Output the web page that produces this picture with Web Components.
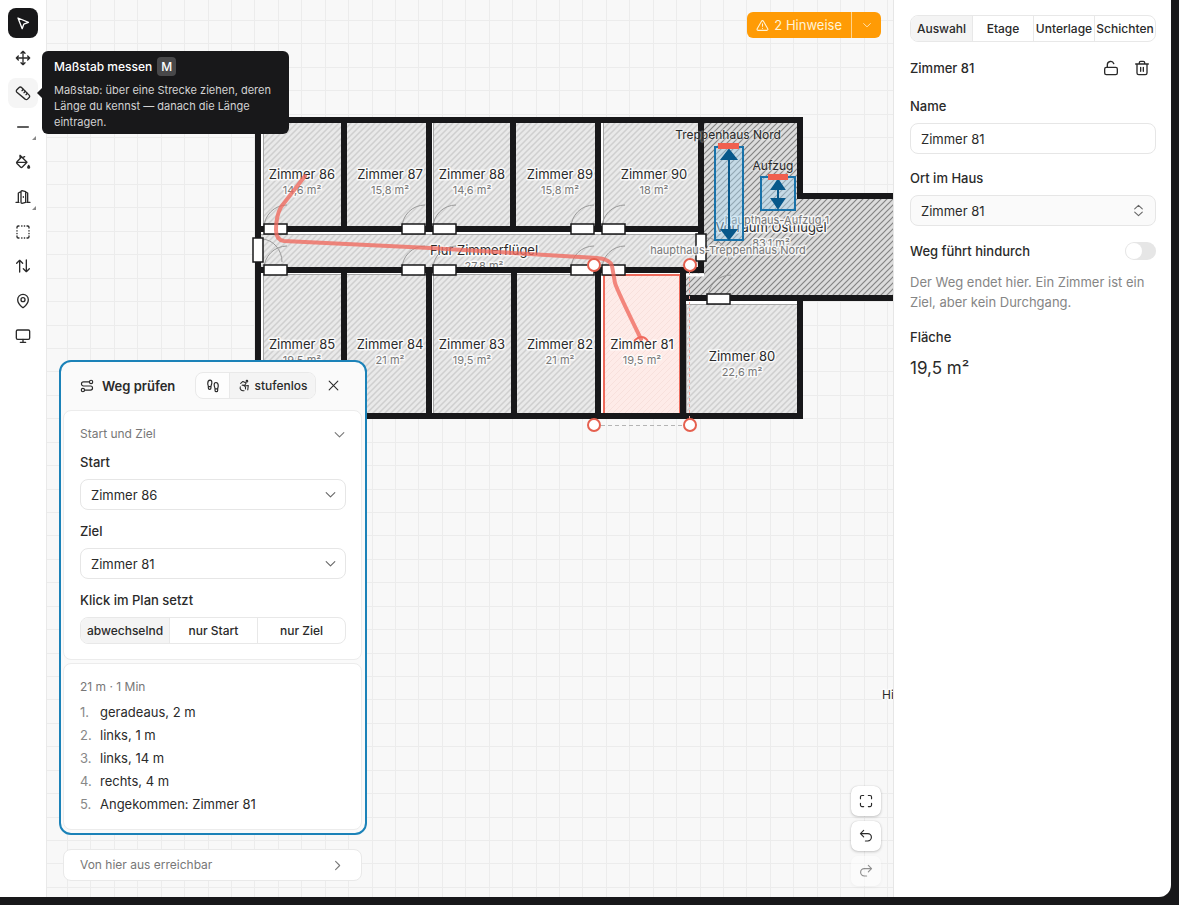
<!DOCTYPE html>
<html lang="de">
<head>
<meta charset="utf-8">
<title>Lageplan – Editor</title>
<style>
html,body{height:100%;margin:0}
body{background:#18181a;font-family:Inter,"Liberation Sans",sans-serif;font-size:13px;color:#2a2a2a}
</style>
</head>
<body>
<plan-app></plan-app>
<script>
const ICONS = {
  pointer:'<path d="M4.5 4.5l6.3 16 2.4-6.8 7-2.5z"/>',
  move:'<path d="M12 2v20M2 12h20M9 5l3-3 3 3M9 19l3 3 3-3M5 9l-3 3 3 3M19 9l3 3-3 3"/>',
  ruler:'<path d="M2.800 7.200l3.400-3.400a2.500 2.500 0 0 1 3.600 0l11.400 11.400a2.500 2.500 0 0 1 0 3.600l-2.400 2.400a2.500 2.500 0 0 1-3.600 0L2.800 10.800a2.500 2.500 0 0 1 0-3.600z"/><path d="M10.500 8.500l2-2M13.500 11.500l2-2M16.500 14.500l2-2"/>',
  line:'<path d="M4 12h16"/>',
  bucket:'<path d="M9.500 5L3 11.500a2 2 0 0 0 0 2.800l5.200 5.200a2 2 0 0 0 2.800 0l7-7L7.500 2M2.800 12.500H18M7.500 2v3M12 5l2.500-1"/><path d="M20.500 17c.8 1.200 1.400 2 1.400 2.900a1.400 1.400 0 0 1-2.800 0c0-.9.600-1.700 1.400-2.900z" fill="currentColor"/>',
  door:'<path d="M1.500 20H6M18 20h4.500M5 20V6l4-2M19 20V6l-3-1.500M9 20V4a1.500 1.500 0 0 1 1.500-1.500L16 4v16l-5.500 1.500A1.500 1.500 0 0 1 9 20zM12.500 11.500v1"/>',
  dashed:'<path d="M3 6V5a2 2 0 0 1 2-2h1M18 3h1a2 2 0 0 1 2 2v1M21 18v1a2 2 0 0 1-2 2h-1M6 21H5a2 2 0 0 1-2-2v-1M10 3h.5M14 3h.5M10 21h.5M14 21h.5M3 10v.5M3 14v.5M21 10v.5M21 14v.5"/>',
  updown:'<path d="M7 21V3.500M2.500 8L7 3.500 11.500 8M17 3v17.500M12.500 16l4.500 4.500 4.500-4.500"/>',
  pin:'<path d="M20 10c0 5-5.500 10.200-7.400 11.800a1 1 0 0 1-1.200 0C9.500 20.200 4 15 4 10a8 8 0 0 1 16 0z"/><circle cx="12" cy="10" r="3"/>',
  monitor:'<rect x="2" y="3" width="20" height="14" rx="2"/><path d="M8 21.500h8M12 17v4"/>',
  route:'<circle cx="5" cy="19" r="2.800"/><circle cx="19" cy="5" r="2.800"/><path d="M16 5H6a3.500 3.500 0 0 0 0 7h12a3.500 3.500 0 0 1 0 7H8"/>',
  feet:'<path d="M4 15.500v-2.400C4 11 3 10 3 7.500 3 4.500 4.500 2 7 2s3 2 3 3.800c0 3-1.500 4.900-1.500 7.500v2.200a2.200 2.200 0 1 1-4.500 0zM20 19.500v-2.400c0-2.100 1-3.100 1-5.600C21 8.500 19.500 6 17 6s-3 2-3 3.800c0 3 1.500 4.900 1.500 7.500v2.200a2.200 2.200 0 1 0 4.500 0zM15.500 17H20M4 13h4.500"/>',
  access:'<circle cx="16.500" cy="4" r="1.500"/><path d="M18 20l1-8-7 1M5 8l4-3.500 6 3-3.500 5.500M4.200 14.500a5.500 5.500 0 0 0 6.800 7M13.800 18.500A5.500 5.500 0 0 0 7.500 11.500"/>',
  close:'<path d="M20 4L4 20M4 4l16 16"/>',
  down:'<path d="M4 8.500l8 8 8-8"/>',
  right:'<path d="M8.500 4.500l7.500 7.500-7.500 7.500"/>',
  sort:'<path d="M5 9L12 2.500 19 9M5 15l7 6.500 7-6.500"/>',
  warn:'<path d="M21.700 18l-8-14a2 2 0 0 0-3.500 0l-8 14A2 2 0 0 0 4 21h16a2 2 0 0 0 1.700-3zM12 9v4.500M12 17v.3"/>',
  unlock:'<rect x="2.500" y="11" width="19" height="11" rx="2.500"/><path d="M6.500 11V7a5 5 0 0 1 9.700-1.500"/>',
  trash:'<path d="M2.500 6h19M19.500 6v13.500a2.500 2.500 0 0 1-2.500 2.500H7a2.500 2.500 0 0 1-2.500-2.500V6M8 6V4a2 2 0 0 1 2-2h4a2 2 0 0 1 2 2v2M10 11v6M14 11v6"/>',
  fit:'<path d="M8 2.500H5A2.500 2.500 0 0 0 2.500 5v3M21.500 8V5A2.500 2.500 0 0 0 19 2.500h-3M2.500 16v3A2.500 2.500 0 0 0 5 21.500h3M16 21.500h3a2.500 2.500 0 0 0 2.500-2.500v-3"/>',
  undo:'<path d="M8 13.500L2.500 8 8 2.500M3 8h12a6 6 0 0 1 0 12.500h-4"/>',
  redo:'<path d="M16 13.500L21.500 8 16 2.500M21 8H9a6 6 0 0 0 0 12.500h4"/>'
};
const define = (name, render) => customElements.define(name, class extends HTMLElement {
  connectedCallback() {
    if (this.shadowRoot) return;
    const t = document.createElement('template');
    t.innerHTML = render(this);
    this.attachShadow({mode:'open'}).append(t.content.cloneNode(true));
  }
});
const attr = (el, name, fallback = '') => el.getAttribute(name) ?? fallback;
const RESET = `:host,*{box-sizing:border-box}button,input,select{font:inherit;color:inherit;margin:0}button{cursor:pointer;padding:0;border:0;background:none}`;

define('ui-icon', el => `<style>:host{display:inline-flex;flex:none}svg{display:block}</style>
<svg width="${attr(el,'size','16')}" height="${attr(el,'size','16')}" viewBox="0 0 24 24" fill="none" stroke="currentColor" stroke-width="${attr(el,'weight','2')}" stroke-linecap="round" stroke-linejoin="round" aria-hidden="true">${ICONS[attr(el,'name')]}</svg>`);

define('ui-segments', el => `<style>${RESET}
:host{display:block}
div{display:grid;grid-auto-flow:column;grid-auto-columns:1fr;height:27px;border:1px solid #e8e8e8;border-radius:8px;overflow:hidden;background:#fff}
button{min-width:0;font-size:12px;font-weight:500;white-space:nowrap;display:flex;justify-content:center;align-items:center}
button+button{border-left:1px solid #e8e8e8}
button[aria-pressed=true]{background:#f4f4f4}
</style><div role="group" aria-label="${attr(el,'label')}">${attr(el,'options').split('|').map((o,i)=>`<button type="button" aria-pressed="${i===0}">${o}</button>`).join('')}</div>`);

define('ui-select', el => `<style>${RESET}
:host{display:block}
label{display:block;font-weight:500;line-height:20px;margin-bottom:7px}
div{display:grid;align-items:center}
select{grid-area:1/1;width:100%;height:31px;border:1px solid #e6e6e6;border-radius:8px;background:${attr(el,'tone')==='soft'?'#fafafa':'#fff'};appearance:none;padding:0 10px}
ui-icon{grid-area:1/1;justify-self:end;margin-right:${attr(el,'tone')==='soft'?'11px':'9px'};pointer-events:none;color:#666}
</style><label for="s">${attr(el,'label')}</label><div><select id="s"><option>${attr(el,'value')}</option></select><ui-icon name="${attr(el,'tone')==='soft'?'sort':'down'}" size="13"></ui-icon></div>`);

define('ui-text', el => `<style>${RESET}
:host{display:block}
label{display:block;font-weight:500;line-height:20px;margin-bottom:7px}
input{width:100%;height:31px;border:1px solid #e6e6e6;border-radius:8px;background:#fff;padding:0 10px}
</style><label for="t">${attr(el,'label')}</label><input id="t" type="text" value="${attr(el,'value')}">`);

define('ui-switch', () => `<style>${RESET}
:host{display:flex;justify-content:space-between;align-items:center}
label{font-weight:500;line-height:20px}
input{appearance:none;margin:0;width:31px;height:18px;border-radius:9px;background:#e6e6e6;display:flex;padding:1px}
input::before{content:"";width:16px;height:16px;border-radius:8px;background:#fff}
</style><label for="c"><slot></slot></label><input id="c" type="checkbox" role="switch">`);

define('tool-button', el => `<style>${RESET}
:host{display:block;position:relative}
button{width:30px;height:30px;border-radius:8px;display:grid;place-items:center}
:host([active]) button{background:#18181a;color:#fff}
:host([hovered]) button{background:#f5f5f5}
i{position:absolute;right:2px;bottom:2px;border-style:solid;border-width:0 0 4px 4px;border-color:transparent transparent #888}
</style><button type="button" aria-label="${attr(el,'label')}"><ui-icon name="${attr(el,'icon')}" size="16" weight="2"></ui-icon></button>${el.hasAttribute('more')?'<i></i>':''}<slot></slot>`);

define('tool-tip', () => `<style>${RESET}
:host{position:absolute;z-index:5;left:34px;top:-27px;width:247px;padding:6px 6px 4px 12px;border-radius:6px;background:#18181a;color:#fff}
:host::before{content:"";position:absolute;left:-5px;top:37px;border-style:solid;border-width:5px 5px 5px 0;border-color:transparent #18181a}
header{display:flex;align-items:center;gap:5px;font-size:12px;font-weight:500;line-height:20px}
kbd{font:inherit;width:19px;height:19px;line-height:19px;text-align:center;border-radius:4px;background:#48484a}
p{margin:5px 0 0;font-size:11px;line-height:16px;color:#d2d2d2}
</style><header>Maßstab messen <kbd>M</kbd></header><p>Maßstab: über eine Strecke ziehen, deren Länge du kennst — danach die Länge eintragen.</p>`);

define('tool-rail', () => `<style>
:host{display:block;background:#fff;border-right:1px solid #e9e9e9;padding:8px;position:relative;z-index:3}
nav{display:flex;flex-direction:column;justify-content:space-between;height:343px}
</style><nav aria-label="Werkzeuge">
<tool-button icon="pointer" label="Auswählen" active></tool-button>
<tool-button icon="move" label="Verschieben"></tool-button>
<tool-button icon="ruler" label="Maßstab messen" hovered><tool-tip></tool-tip></tool-button>
<tool-button icon="line" label="Wand" more></tool-button>
<tool-button icon="bucket" label="Füllen"></tool-button>
<tool-button icon="door" label="Tür" more></tool-button>
<tool-button icon="dashed" label="Bereich"></tool-button>
<tool-button icon="updown" label="Treppe"></tool-button>
<tool-button icon="pin" label="Ort"></tool-button>
<tool-button icon="monitor" label="Bildschirm"></tool-button></nav>`);

/* Floor plan: rooms, walls, doors, vertical links and the computed route. */
const ROOMS = [
  [263,122,79,107,'Zimmer 86','14,6 m²',302,174],[346,122,81,107,'Zimmer 87','15,8 m²',390,174],
  [433,122,78,107,'Zimmer 88','14,6 m²',472,174],[515,122,81,107,'Zimmer 89','15,8 m²',560,174],
  [603,122,96,107,'Zimmer 90','18 m²',654,174],
  [263,274,79,142,'Zimmer 85','19,5 m²',302,344],[346,274,81,142,'Zimmer 84','21 m²',390,344],
  [433,274,78,142,'Zimmer 83','19,5 m²',472,344],[516,274,81,142,'Zimmer 82','21 m²',560,344],
  [686,304,113,112,'Zimmer 80','22,6 m²',742,356],[260,234,440,36,'Flur Zimmerflügel','27,8 m²',484,250]
];
const DOOR_X = [263,401,432,570,601];
const label = (x,y,text,cls) => `<text class="${cls}" x="${x}" y="${y}">${text}</text>`;
const doorArc = (x,y) => `<path d="M${x+1} ${y}a23 23 0 0 1 23-23"/>`;
const GRID = [0,23,47,70,94,117,141].map(n=>`M${n+.5} 0v164M0 ${n+.5}h164`).join('');

define('floor-plan', () => `<style>
:host{display:block;width:100%;height:100%;overflow:hidden}
svg{display:block;width:100%;height:100%}
text{text-anchor:middle;dominant-baseline:central;paint-order:stroke;stroke:#ffffffa8;stroke-width:3;stroke-linejoin:round;fill:#2a2a2a;font-size:12px}
.name{font-size:13px;stroke:#ffffffd0}.area{font-size:11px;fill:#777;stroke:#ffffffd0}.ref{font-size:11px;fill:#777;stroke:#ffffffc0}
.over{stroke:#ffffff40}
.walls{fill:none;stroke:#18181a;stroke-width:6}
.doors rect{fill:#fff;stroke:#18181a;stroke-width:1.5}
.arcs{fill:none;stroke:#999;stroke-width:1}
.link rect{fill:#a9d8f470;stroke:#1972a9;stroke-width:2}
.link path{fill:#07588a;stroke:#07588a;stroke-width:2}
</style>
<svg role="img" aria-label="Grundriss">
<defs>
<pattern id="grid" width="164" height="164" x="20" y="20" patternUnits="userSpaceOnUse"><path d="${GRID}" stroke="#ececec"/></pattern>
<pattern id="hatch" width="6" height="6" patternUnits="userSpaceOnUse"><rect width="6" height="6" fill="#e9e9e9"/><path d="M-1 1L1-1M0 6L6 0M5 7L7 5" stroke="#cfcfcf" stroke-width="1.500"/></pattern>
<pattern id="dark" width="6" height="6" patternUnits="userSpaceOnUse"><rect width="6" height="6" fill="#dcdcdc"/><path d="M-1 1L1-1M0 6L6 0M5 7L7 5" stroke="#848484" stroke-width="1.200"/></pattern>
<pattern id="rose" width="6" height="6" patternUnits="userSpaceOnUse"><rect width="6" height="6" fill="#feebe8"/><path d="M-1 1L1-1M0 6L6 0M5 7L7 5" stroke="#f8e0dc"/></pattern>
</defs>
<rect width="100%" height="100%" fill="#f8f8f8"/><rect width="100%" height="100%" fill="url(#grid)"/>
<g transform="translate(-47 0)">
<path d="M258 120H800V196H1000V298H800V416H258Z" fill="#fff"/>
<path d="M701 122H800V196H1000V298H686V272H701Z" fill="url(#dark)"/>
${ROOMS.map(([x,y,w,h])=>`<rect x="${x+.5}" y="${y+.5}" width="${w}" height="${h}" fill="url(#hatch)" stroke="#a6a6a6"/>`).join('')}
<rect x="603" y="275" width="78" height="140" fill="url(#rose)"/>
<path d="M604 414V275H680V414" fill="none" stroke="#ee6a5b" stroke-width="2"/>
${ROOMS.map(r=>label(r[6],r[7],r[4],'name')+label(r[6],r[7]+16,r[5],'area')).join('')}
${label(642,344,'Zimmer 81','name')}${label(642,360,'19,5 m²','area')}
${label(771,227,'Vorraum Ostflügel','name')}${label(771,243,'83,1 m²','area')}
<g class="arcs">${DOOR_X.map(x=>doorArc(x,228)+doorArc(x,269)).join('')}${doorArc(707,298)}<path d="M262 239a21 23 0 0 1 20 23M706 238a23 23 0 0 1 23 23"/></g>
<path d="M686 275H704" stroke="#fff" stroke-width="3"/>
<path class="walls" d="M258 416V120H800V196H1000M344 120V229M429 120V229M513 120V229M598 120V229M701 120V273M258 229H701M258 270H704M344 270V416M429 270V416M514 270V416M598 270V416M683 270V416M255 416H803M800 419V298M683 298H1000"/>
<g class="doors">${DOOR_X.map(x=>`<rect x="${x+1}" y="224" width="23" height="10"/><rect x="${x+1}" y="265" width="23" height="10"/>`).join('')}
<rect x="253" y="238" width="10" height="24"/><rect x="696" y="234" width="10" height="27"/><rect x="707" y="294" width="23" height="10"/></g>
${label(728,134,'Treppenhaus Nord','over')}${label(773,165,'Aufzug','over')}
${label(777,220,'haupthaus-Aufzug 1','ref')}${label(728,250,'haupthaus-Treppenhaus Nord','ref')}
<g class="link"><rect x="715" y="147" width="28" height="93"/><path d="M729 156V232M729 150l7 9h-14zM729 239l7-9h-14z"/>
<rect x="761" y="177" width="34" height="33"/><path d="M778 186V202M778 180l6 9h-12zM778 208l6-9h-12z"/></g>
<path d="M718 146h21M768 177h20" stroke="#f0604f" stroke-width="6"/>
<path d="M689.5 272V420" stroke="#eda59c" stroke-dasharray="3 3"/><path d="M601 425.500H684" stroke="#b5b5b5" stroke-dasharray="4 3"/>
<path d="M305 176L281 207Q276 216 276 230Q276 240 284 241L430 248L597 258Q610 259 612 266L615 283Q617 290 641 339" fill="none" stroke="#f0695d" stroke-opacity=".78" stroke-width="4" stroke-linecap="round" stroke-linejoin="round"/>
<path d="M634 341q8-8 14 0" fill="none" stroke="#f0695d" stroke-width="2"/>
<g fill="#fff" stroke="#e5604f" stroke-width="2"><circle cx="594" cy="265" r="6"/><circle cx="690" cy="265" r="6"/><circle cx="594" cy="425" r="6"/><circle cx="690" cy="425" r="6"/></g>
<text x="882" y="694" style="text-anchor:start">Hi</text>
</g></svg>`);

define('hint-button', () => `<style>${RESET}
:host{display:flex;height:26px;border-radius:6px;background:#ff9b05;color:#fff3d6;overflow:hidden}
button{display:flex;align-items:center;justify-content:center;gap:5px;padding:0 9px}
button+button{width:30px;padding:0;border-left:1px solid #ffd38c}
</style><button type="button"><ui-icon name="warn" size="13"></ui-icon>2 Hinweise</button><button type="button" aria-label="Hinweise anzeigen"><ui-icon name="down" size="10"></ui-icon></button>`);

define('view-controls', () => `<style>${RESET}
:host{display:flex;flex-direction:column;gap:5px}
button{width:30px;height:30px;border-radius:7px;background:#fff;box-shadow:0 1px 3px #0003,0 0 1px #0003;display:grid;place-items:center}
button:disabled{opacity:.5;color:#2a2a2a;box-shadow:0 1px 3px #0001}
</style><button type="button" aria-label="Einpassen"><ui-icon name="fit" size="14" weight="2"></ui-icon></button><button type="button" aria-label="Rückgängig"><ui-icon name="undo" size="14" weight="2"></ui-icon></button><button type="button" aria-label="Wiederholen" disabled><ui-icon name="redo" size="14" weight="2"></ui-icon></button>`);

define('route-panel', () => `<style>${RESET}
:host{display:block;width:308px}
.frame{border:2px solid #1b82b8;border-radius:12px;background:#fafafa;padding:0 3px 3px 2px;display:grid;gap:3px}
header{height:45px;display:flex;align-items:center;padding:2px 22px 0 17px}
h2{margin:0 auto 0 8px;font-size:13px;font-weight:600}
.mode{display:flex;height:27px;border:1px solid #e9e9e9;border-radius:8px;overflow:hidden;background:#fdfdfd}
.mode button{display:flex;align-items:center;justify-content:center;gap:4px;font-size:12px;font-weight:500;width:33px}
.mode button+button{width:86px;border-left:1px solid #e9e9e9;background:#f4f4f4}
.close{margin-left:11px;display:flex}
.card{background:#fff;border:1px solid #ececec;border-radius:8px;padding:13px 15px 15px 16px}
.steps{padding-bottom:13px}
.top{display:flex;justify-content:space-between;align-items:center;line-height:20px;font-size:12px;color:#777;width:100%}
.fields{display:grid;gap:11px;margin-top:8px}
h3{margin:0 0 7px;font-size:13px;font-weight:500;line-height:20px}
ol{list-style:none;margin:4px 0 0;padding:0;counter-reset:n}
li{counter-increment:n;line-height:23px;display:flex}
li::before{content:counter(n) ".";width:20px;color:#888}
.reach{margin:14px 4px 0;width:299px;padding:5px 17px 5px 16px;background:#fff;border:1px solid #e9e9e9;border-radius:8px}
</style>
<section class="frame" aria-label="Weg prüfen">
<header><ui-icon name="route" size="14" weight="2"></ui-icon><h2>Weg prüfen</h2>
<div class="mode"><button type="button" aria-label="Zu Fuß" aria-pressed="false"><ui-icon name="feet" size="14"></ui-icon></button><button type="button" aria-pressed="true"><ui-icon name="access" size="13"></ui-icon>stufenlos</button></div>
<button type="button" class="close" aria-label="Schließen"><ui-icon name="close" size="13"></ui-icon></button></header>
<div class="card"><button type="button" class="top">Start und Ziel<ui-icon name="down" size="13"></ui-icon></button>
<div class="fields"><ui-select label="Start" value="Zimmer 86"></ui-select><ui-select label="Ziel" value="Zimmer 81"></ui-select>
<div><h3>Klick im Plan setzt</h3><ui-segments label="Klick im Plan setzt" options="abwechselnd|nur Start|nur Ziel"></ui-segments></div></div></div>
<div class="card steps"><div class="top">21 m · 1 Min</div><ol><li>geradeaus, 2 m</li><li>links, 1 m</li><li>links, 14 m</li><li>rechts, 4 m</li><li>Angekommen: Zimmer 81</li></ol></div>
</section>
<button type="button" class="top reach">Von hier aus erreichbar<ui-icon name="right" size="13"></ui-icon></button>`);

define('inspector-panel', () => `<style>${RESET}
:host{display:block;background:#fff;border-left:1px solid #e6e6e6;padding:15px 15px 15px 16px}
header{display:flex;align-items:center;gap:15px;padding:0 6px 0 0;height:20px;margin:16px 0 18px}
h2{margin:0 auto 0 0;font-size:13px;font-weight:500}
button{display:flex}
ui-text{margin-bottom:14px}ui-select{margin-bottom:15px}
p{margin:11px 0 15px;line-height:20px;color:#858585}
h3{margin:0 0 9px;font-size:13px;font-weight:500;line-height:20px}
output{display:block;font-size:17px;line-height:24px}
</style>
<ui-segments label="Ansicht" options="Auswahl|Etage|Unterlage|Schichten"></ui-segments>
<header><h2>Zimmer 81</h2><button type="button" aria-label="Sperren"><ui-icon name="unlock" size="16"></ui-icon></button><button type="button" aria-label="Löschen"><ui-icon name="trash" size="16"></ui-icon></button></header>
<ui-text label="Name" value="Zimmer 81"></ui-text>
<ui-select label="Ort im Haus" value="Zimmer 81" tone="soft"></ui-select>
<ui-switch>Weg führt hindurch</ui-switch>
<p>Der Weg endet hier. Ein Zimmer ist ein Ziel, aber kein Durchgang.</p>
<h3>Fläche</h3><output>19,5 m²</output>`);

define('plan-app', () => `<style>
:host{display:grid;grid-template-columns:47px minmax(0,1fr) 278px;box-sizing:border-box;height:100vh;padding:0 8px 8px 0}
main{position:relative;min-width:0;min-height:0;overflow:hidden}
hint-button{position:absolute;right:12px;top:12px}
view-controls{position:absolute;right:12px;bottom:11px}
route-panel{position:absolute;left:12px;bottom:16px}
inspector-panel{border-bottom-right-radius:12px}
</style><tool-rail></tool-rail><main><floor-plan></floor-plan><hint-button></hint-button><route-panel></route-panel><view-controls></view-controls></main><inspector-panel></inspector-panel>`);
</script>
</body>
</html>
